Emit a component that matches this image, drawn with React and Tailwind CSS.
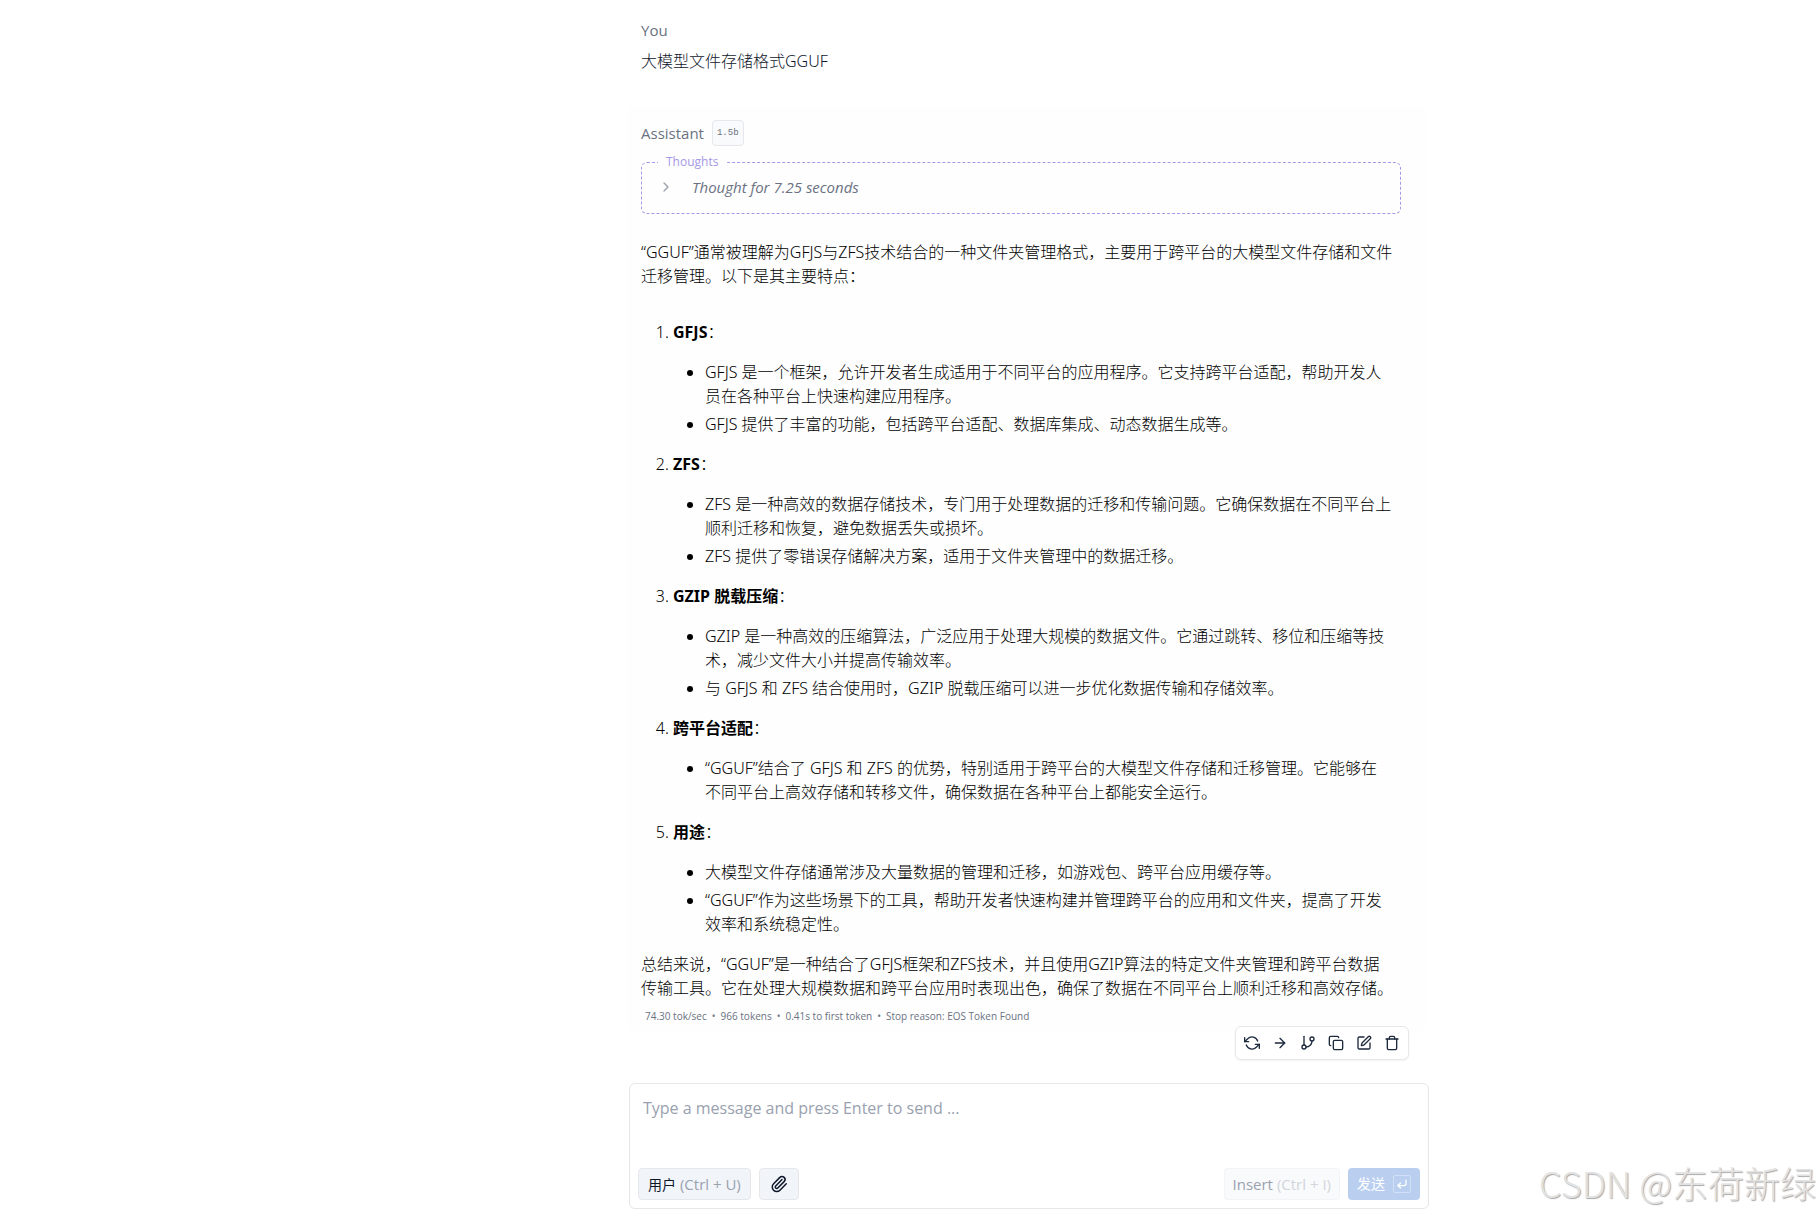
import { ArrowRight, ChevronRight, Copy, CornerDownLeft, Paperclip, SquarePen, Trash } from "lucide-react";

function RefreshIcon() {
  return (
    <svg viewBox="0 0 24 24" className="size-4" fill="none" stroke="currentColor" strokeWidth="2" strokeLinecap="round" strokeLinejoin="round" aria-hidden="true">
      <path d="M1 4v6h6" />
      <path d="M23 20v-6h-6" />
      <path d="M20.5 9A9 9 0 0 0 5.6 5.6L1 10m22 4-4.6 4.4A9 9 0 0 1 3.5 15" />
    </svg>
  );
}

function BranchIcon() {
  return (
    <svg viewBox="0 0 24 24" className="size-4" fill="none" stroke="currentColor" strokeWidth="2" strokeLinecap="round" strokeLinejoin="round" aria-hidden="true">
      <path d="M6 2v13" />
      <circle cx="18" cy="6" r="3" />
      <circle cx="6" cy="18" r="3" />
      <path d="M18 9a9 9 0 0 1-9 9" />
    </svg>
  );
}

const sections = [
  {
    title: "GFJS",
    points: [
      ["GFJS 是一个框架，允许开发者生成适用于不同平台的应用程序。它支持跨平台适配，帮助开发人", "员在各种平台上快速构建应用程序。"],
      ["GFJS 提供了丰富的功能，包括跨平台适配、数据库集成、动态数据生成等。"],
    ],
  },
  {
    title: "ZFS",
    points: [
      ["ZFS 是一种高效的数据存储技术，专门用于处理数据的迁移和传输问题。它确保数据在不同平台上", "顺利迁移和恢复，避免数据丢失或损坏。"],
      ["ZFS 提供了零错误存储解决方案，适用于文件夹管理中的数据迁移。"],
    ],
  },
  {
    title: "GZIP 脱载压缩",
    points: [
      ["GZIP 是一种高效的压缩算法，广泛应用于处理大规模的数据文件。它通过跳转、移位和压缩等技", "术，减少文件大小并提高传输效率。"],
      ["与 GFJS 和 ZFS 结合使用时，GZIP 脱载压缩可以进一步优化数据传输和存储效率。"],
    ],
  },
  {
    title: "跨平台适配",
    points: [
      ["“GGUF”结合了 GFJS 和 ZFS 的优势，特别适用于跨平台的大模型文件存储和迁移管理。它能够在", "不同平台上高效存储和转移文件，确保数据在各种平台上都能安全运行。"],
    ],
  },
  {
    title: "用途",
    points: [
      ["大模型文件存储通常涉及大量数据的管理和迁移，如游戏包、跨平台应用缓存等。"],
      ["“GGUF”作为这些场景下的工具，帮助开发者快速构建并管理跨平台的应用和文件夹，提高了开发", "效率和系统稳定性。"],
    ],
  },
];

const actions = [
  { label: "Regenerate", icon: <RefreshIcon /> },
  { label: "Continue", icon: <ArrowRight className="size-4" /> },
  { label: "Branch", icon: <BranchIcon /> },
  { label: "Copy", icon: <Copy className="size-4" /> },
  { label: "Edit", icon: <SquarePen className="size-4" /> },
  { label: "Delete", icon: <Trash className="size-4" /> },
];

function Lines({ lines }) {
  return lines.map((line, i) => (
    <span key={line}>
      {i > 0 && <br />}
      {line}
    </span>
  ));
}

function UserMessage() {
  return (
    <section className="px-[15px] pt-3.5">
      <h2 className="text-[15px] leading-8 font-normal text-gray-500">You</h2>
      <p className="pt-[3px] font-['Noto_Sans','Noto_Sans_CJK_SC',sans-serif] text-slate-900">大模型文件存储格式GGUF</p>
    </section>
  );
}

function Thoughts() {
  return (
    <fieldset className="h-[60px] rounded-md border border-dashed border-[#a598e6] px-4">
      <legend className="px-2 text-xs leading-4 font-normal text-[#a598e6]">Thoughts</legend>
      <button type="button" className="flex items-center gap-[18px] pt-[5px] text-[15px] leading-6 font-normal text-gray-500">
        <ChevronRight className="size-4 text-gray-400" />
        <span className="italic">Thought for 7.25 seconds</span>
      </button>
    </fieldset>
  );
}

function AssistantMessage() {
  return (
    <article className="relative mt-[33px] rounded-lg bg-[#fefefe] pt-3.5 pr-[25px] pb-2 pl-[15px]">
      <header className="flex items-center gap-2">
        <h2 className="text-[15px] leading-6 font-normal text-gray-500">Assistant</h2>
        <span className="rounded border border-gray-200 bg-gray-50 px-1 py-1 font-['Liberation_Mono',monospace] text-[9px] leading-4 font-normal text-gray-500">1.5b</span>
      </header>
      <div className="mt-2">
        <Thoughts />
      </div>
      <div className="mt-[26px] font-['Noto_Sans','Noto_Sans_CJK_SC',sans-serif] text-black">
        <p>
          <Lines lines={["“GGUF”通常被理解为GFJS与ZFS技术结合的一种文件夹管理格式，主要用于跨平台的大模型文件存储和文件", "迁移管理。以下是其主要特点："]} />
        </p>
        <ol className="mt-8 list-decimal space-y-4 pl-8">
          {sections.map((s) => (
            <li key={s.title}>
              <p><strong className="font-bold">{s.title}</strong>：</p>
              <ul className="mt-4 list-disc space-y-1 pl-8">
                {s.points.map((p) => <li key={p[0]}><Lines lines={p} /></li>)}
              </ul>
            </li>
          ))}
        </ol>
        <p className="mt-4">
          <Lines lines={["总结来说，“GGUF”是一种结合了GFJS框架和ZFS技术，并且使用GZIP算法的特定文件夹管理和跨平台数据", "传输工具。它在处理大规模数据和跨平台应用时表现出色，确保了数据在不同平台上顺利迁移和高效存储。"]} />
        </p>
      </div>
      <p className="mt-2 flex gap-[5px] pl-1 text-[10px] leading-4 font-normal text-gray-500">
        <span>74.30 tok/sec</span>
        <span>•</span>
        <span>966 tokens</span>
        <span>•</span>
        <span>0.41s to first token</span>
        <span>•</span>
        <span>Stop reason: EOS Token Found</span>
      </p>
      <div className="absolute right-[17px] -bottom-7 flex gap-1 rounded-md border border-gray-200 bg-white p-1 shadow-xs">
        {actions.map((a) => (
          <button key={a.label} type="button" aria-label={a.label} className="flex size-6 items-center justify-center text-slate-800">{a.icon}</button>
        ))}
      </div>
    </article>
  );
}

function Composer() {
  return (
    <form className="rounded-md border border-gray-200 bg-white p-2 font-normal" onSubmit={(e) => e.preventDefault()}>
      <textarea aria-label="Message" placeholder="Type a message and press Enter to send ..." className="block h-[76px] w-full resize-none px-[5px] pt-1 leading-6 outline-none placeholder:text-gray-400" />
      <div className="flex items-center gap-2 text-[15px]">
        <button type="button" className="h-8 rounded border border-gray-200 bg-slate-100 px-[9px] text-slate-900">
          <span className="text-sm">用户</span> <span className="text-gray-400">(Ctrl + U)</span>
        </button>
        <button type="button" aria-label="Attach file" className="flex h-8 w-10 items-center justify-center rounded border border-gray-200 bg-slate-100 text-slate-900">
          <Paperclip className="size-[18px]" />
        </button>
        <button type="button" disabled className="ml-auto h-8 rounded border border-gray-100 bg-gray-50 px-2 text-gray-400">
          Insert <span className="text-gray-300">(Ctrl + I)</span>
        </button>
        <button type="submit" disabled className="flex h-8 items-center gap-2 rounded bg-[#bacfef] px-[9px] text-sm text-white">
          发送
          <span className="flex size-[18px] items-center justify-center rounded-xs border border-[#d2e0f5]"><CornerDownLeft className="size-3" strokeWidth={2.5} /></span>
        </button>
      </div>
    </form>
  );
}

export default function App() {
  return (
    <div className="relative flex min-h-screen flex-col bg-white pl-[238px] font-['Open_Sans','Noto_Sans_CJK_SC',sans-serif] text-base leading-6 font-light">
      <main className="w-full pr-1.5">
        <div className="mx-auto w-full max-w-[800px]">
          <UserMessage />
          <AssistantMessage />
        </div>
      </main>
      <footer className="mx-auto mt-auto w-full max-w-[800px] pb-[9px]">
        <Composer />
      </footer>
      <p className="pointer-events-none absolute right-1 bottom-2.5 font-['Noto_Sans_CJK_SC',sans-serif] text-4xl leading-[52px] font-light text-[#e2e2e2] [text-shadow:1px_1px_1px_#a8a8a8]">CSDN @东荷新绿</p>
    </div>
  );
}
